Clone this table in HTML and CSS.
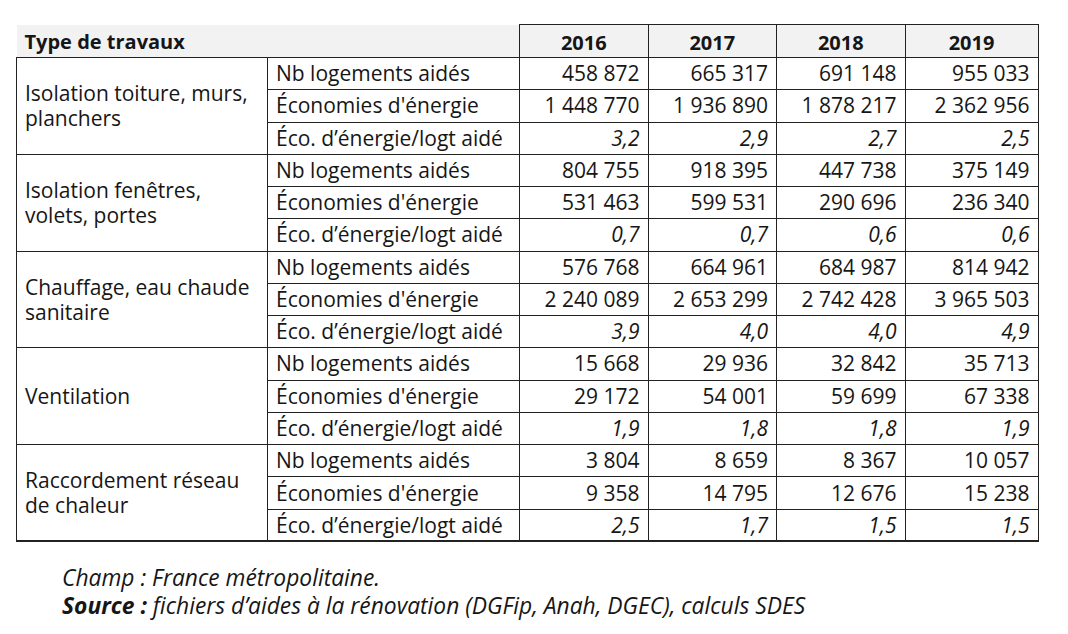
FILE: index.html
```html
<!DOCTYPE html>
<html lang="fr">
<head>
<meta charset="utf-8">
<title>Travaux de rénovation</title>
<link rel="stylesheet" href="styles.css">
</head>
<body>
<div class="page">
<table class="data">
<colgroup>
<col class="c-type"><col class="c-ind"><col class="c-y"><col class="c-y"><col class="c-y"><col class="c-y4">
</colgroup>
<thead>
<tr><th class="h-type" colspan="2">Type de travaux</th><th class="h-year">2016</th><th class="h-year">2017</th><th class="h-year">2018</th><th class="h-year">2019</th></tr>
</thead>
<tbody>
<tr><td class="lbl" rowspan="3">Isolation toiture, murs,<br>planchers</td><td class="ind">Nb logements aidés</td><td class="num">458&nbsp;872</td><td class="num">665&nbsp;317</td><td class="num">691&nbsp;148</td><td class="num">955&nbsp;033</td></tr>
<tr><td class="ind">Économies d'énergie</td><td class="num">1&nbsp;448&nbsp;770</td><td class="num">1&nbsp;936&nbsp;890</td><td class="num">1&nbsp;878&nbsp;217</td><td class="num">2&nbsp;362&nbsp;956</td></tr>
<tr><td class="ind">Éco. d’énergie/logt aidé</td><td class="num it">3,2</td><td class="num it">2,9</td><td class="num it">2,7</td><td class="num it">2,5</td></tr>

<tr><td class="lbl" rowspan="3">Isolation fenêtres,<br>volets, portes</td><td class="ind">Nb logements aidés</td><td class="num">804&nbsp;755</td><td class="num">918&nbsp;395</td><td class="num">447&nbsp;738</td><td class="num">375&nbsp;149</td></tr>
<tr><td class="ind">Économies d'énergie</td><td class="num">531&nbsp;463</td><td class="num">599&nbsp;531</td><td class="num">290&nbsp;696</td><td class="num">236&nbsp;340</td></tr>
<tr><td class="ind">Éco. d’énergie/logt aidé</td><td class="num it">0,7</td><td class="num it">0,7</td><td class="num it">0,6</td><td class="num it">0,6</td></tr>

<tr><td class="lbl" rowspan="3">Chauffage, eau chaude<br>sanitaire</td><td class="ind">Nb logements aidés</td><td class="num">576&nbsp;768</td><td class="num">664&nbsp;961</td><td class="num">684&nbsp;987</td><td class="num">814&nbsp;942</td></tr>
<tr><td class="ind">Économies d'énergie</td><td class="num">2&nbsp;240&nbsp;089</td><td class="num">2&nbsp;653&nbsp;299</td><td class="num">2&nbsp;742&nbsp;428</td><td class="num">3&nbsp;965&nbsp;503</td></tr>
<tr><td class="ind">Éco. d’énergie/logt aidé</td><td class="num it">3,9</td><td class="num it">4,0</td><td class="num it">4,0</td><td class="num it">4,9</td></tr>

<tr><td class="lbl" rowspan="3">Ventilation</td><td class="ind">Nb logements aidés</td><td class="num">15&nbsp;668</td><td class="num">29&nbsp;936</td><td class="num">32&nbsp;842</td><td class="num">35&nbsp;713</td></tr>
<tr><td class="ind">Économies d'énergie</td><td class="num">29&nbsp;172</td><td class="num">54&nbsp;001</td><td class="num">59&nbsp;699</td><td class="num">67&nbsp;338</td></tr>
<tr><td class="ind">Éco. d’énergie/logt aidé</td><td class="num it">1,9</td><td class="num it">1,8</td><td class="num it">1,8</td><td class="num it">1,9</td></tr>

<tr class="last-group"><td class="lbl" rowspan="3">Raccordement réseau<br>de chaleur</td><td class="ind">Nb logements aidés</td><td class="num">3&nbsp;804</td><td class="num">8&nbsp;659</td><td class="num">8&nbsp;367</td><td class="num">10&nbsp;057</td></tr>
<tr><td class="ind">Économies d'énergie</td><td class="num">9&nbsp;358</td><td class="num">14&nbsp;795</td><td class="num">12&nbsp;676</td><td class="num">15&nbsp;238</td></tr>
<tr class="last"><td class="ind">Éco. d’énergie/logt aidé</td><td class="num it">2,5</td><td class="num it">1,7</td><td class="num it">1,5</td><td class="num it">1,5</td></tr>
</tbody>
</table>
<div class="notes">
<p class="note">Champ : France métropolitaine.</p>
<p class="note"><b>Source :</b> fichiers d’aides à la rénovation (DGFip, Anah, DGEC), calculs SDES</p>
</div>
</div>
</body>
</html>
```

FILE: styles.css
```css
html, body {
  margin: 0;
  padding: 0;
  background: #ffffff;
}

body {
  font-family: "Open Sans", "Noto Sans", "DejaVu Sans", sans-serif;
  color: #161616;
}

.page {
  padding: 24px 0 0 16px;
}

.data {
  border-collapse: collapse;
  table-layout: fixed;
  width: 1022px;
  font-size: 21px;
}

.c-type { width: 251px; }
.c-ind { width: 252px; }
.c-y { width: 128.5px; }
.c-y4 { width: 133px; }

.data thead tr {
  height: 33px;
  background: #f2f2f2;
}

.data th {
  font-size: 20px;
  font-weight: 700;
  padding: 3px 8px 0;
  line-height: 1;
  vertical-align: middle;
}

.h-type {
  text-align: left;
  border-bottom: 1px solid #222;
}

.h-year {
  text-align: center;
  border: 1px solid #222;
}

.data tbody tr {
  height: 32.27px;
}

.data td {
  border: 1px solid #222;
  padding: 0 8px;
  line-height: 1.1;
  vertical-align: middle;
  white-space: nowrap;
}

.data td.lbl {
  line-height: 25px;
  padding-top: 1px;
}

.data tr.last td,
.data tr.last-group td.lbl {
  border-bottom: 2px solid #222;
}

.lbl {
  text-align: left;
}

.ind {
  text-align: left;
}

.num {
  text-align: right;
}

.it {
  font-style: italic;
}

.notes {
  padding: 22px 0 0 46px;
}

.note {
  margin: 0;
  font-size: 22.8px;
  line-height: 28px;
  font-style: italic;
}

.note b {
  font-weight: 700;
}
```
